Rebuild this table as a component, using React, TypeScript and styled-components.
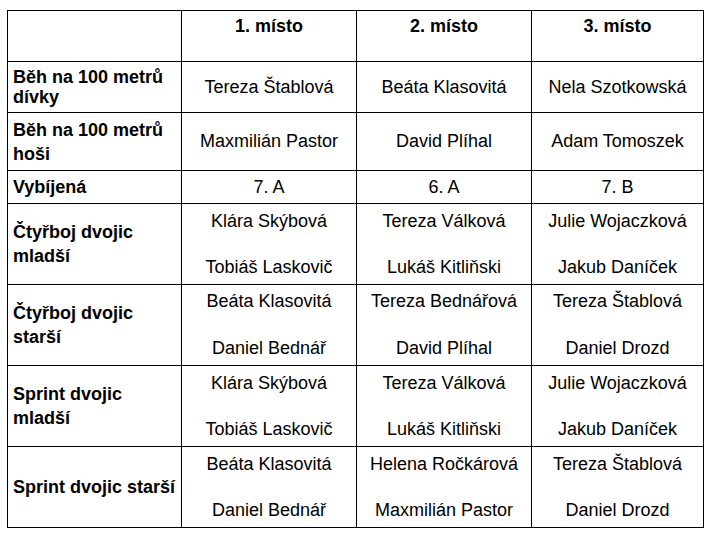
import React from "react";
import styled, { createGlobalStyle } from "styled-components";

const Global = createGlobalStyle`
  html, body { margin: 0; padding: 0; background: #ffffff; }
  body { font-family: "Liberation Sans", Arial, sans-serif; color: #000; }
`;

const Page = styled.div`
  padding: 10px 0 0 7px;
`;

const Table = styled.table`
  border-collapse: collapse;
  table-layout: fixed;
  width: 696px;
  font-family: "Liberation Sans", Arial, sans-serif;
  font-size: 18px;
  color: #000;
`;

const Row = styled.tr<{ $h: number }>`
  height: ${(p) => p.$h}px;
`;

const HeadCell = styled.th`
  border: 1px solid #000;
  font-weight: bold;
  text-align: center;
  vertical-align: top;
  padding: 5px 4px 0;
  line-height: 21px;
`;

const Label = styled.th<{ $lh: number }>`
  border: 1px solid #000;
  font-weight: bold;
  text-align: left;
  vertical-align: middle;
  padding: 0 4px 0 5px;
  line-height: ${(p) => p.$lh}px;
  white-space: nowrap;
`;

const Cell = styled.td<{ $lh: number }>`
  border: 1px solid #000;
  text-align: center;
  vertical-align: middle;
  padding: 0 4px;
  line-height: ${(p) => p.$lh}px;
  white-space: nowrap;
`;

const Line = styled.div``;
const Gap = styled.div``;

type Entry = {
  label: string[];
  labelLh: number;
  cells: string[][];
  cellLh: number;
  h: number;
};

const rows: Entry[] = [
  {
    label: ["Běh na 100 metrů", "dívky"],
    labelLh: 20,
    cells: [["Tereza Štablová"], ["Beáta Klasovitá"], ["Nela Szotkowská"]],
    cellLh: 21,
    h: 51,
  },
  {
    label: ["Běh na 100 metrů", "hoši"],
    labelLh: 24,
    cells: [["Maxmilián Pastor"], ["David Plíhal"], ["Adam Tomoszek"]],
    cellLh: 21,
    h: 58,
  },
  {
    label: ["Vybíjená"],
    labelLh: 21,
    cells: [["7. A"], ["6. A"], ["7. B"]],
    cellLh: 21,
    h: 33,
  },
  {
    label: ["Čtyřboj dvojic", "mladší"],
    labelLh: 24,
    cells: [
      ["Klára Skýbová", "Tobiáš Laskovič"],
      ["Tereza Válková", "Lukáš Kitliňski"],
      ["Julie Wojaczková", "Jakub Daníček"],
    ],
    cellLh: 23,
    h: 81,
  },
  {
    label: ["Čtyřboj dvojic", "starší"],
    labelLh: 24,
    cells: [
      ["Beáta Klasovitá", "Daniel Bednář"],
      ["Tereza Bednářová", "David Plíhal"],
      ["Tereza Štablová", "Daniel Drozd"],
    ],
    cellLh: 23.5,
    h: 81,
  },
  {
    label: ["Sprint dvojic", "mladší"],
    labelLh: 24,
    cells: [
      ["Klára Skýbová", "Tobiáš Laskovič"],
      ["Tereza Válková", "Lukáš Kitliňski"],
      ["Julie Wojaczková", "Jakub Daníček"],
    ],
    cellLh: 23,
    h: 81,
  },
  {
    label: ["Sprint dvojic starší"],
    labelLh: 24,
    cells: [
      ["Beáta Klasovitá", "Daniel Bednář"],
      ["Helena Ročkárová", "Maxmilián Pastor"],
      ["Tereza Štablová", "Daniel Drozd"],
    ],
    cellLh: 23,
    h: 81,
  },
];

function CellContent({ lines }: { lines: string[] }) {
  if (lines.length === 1) return <Line>{lines[0]}</Line>;
  return (
    <>
      <Line>{lines[0]}</Line>
      <Gap>&nbsp;</Gap>
      <Line>{lines[1]}</Line>
    </>
  );
}

export default function App() {
  return (
    <Page>
      <Global />
      <Table>
        <colgroup>
          <col style={{ width: 174 }} />
          <col style={{ width: 175 }} />
          <col style={{ width: 175 }} />
          <col style={{ width: 172 }} />
        </colgroup>
        <thead>
          <Row $h={51}>
            <HeadCell></HeadCell>
            <HeadCell>1. místo</HeadCell>
            <HeadCell>2. místo</HeadCell>
            <HeadCell>3. místo</HeadCell>
          </Row>
        </thead>
        <tbody>
          {rows.map((r, i) => (
            <Row $h={r.h} key={i}>
              <Label $lh={r.labelLh}>
                {r.label.map((l, j) => (
                  <Line key={j}>{l}</Line>
                ))}
              </Label>
              {r.cells.map((c, j) => (
                <Cell $lh={r.cellLh} key={j}>
                  <CellContent lines={c} />
                </Cell>
              ))}
            </Row>
          ))}
        </tbody>
      </Table>
    </Page>
  );
}
